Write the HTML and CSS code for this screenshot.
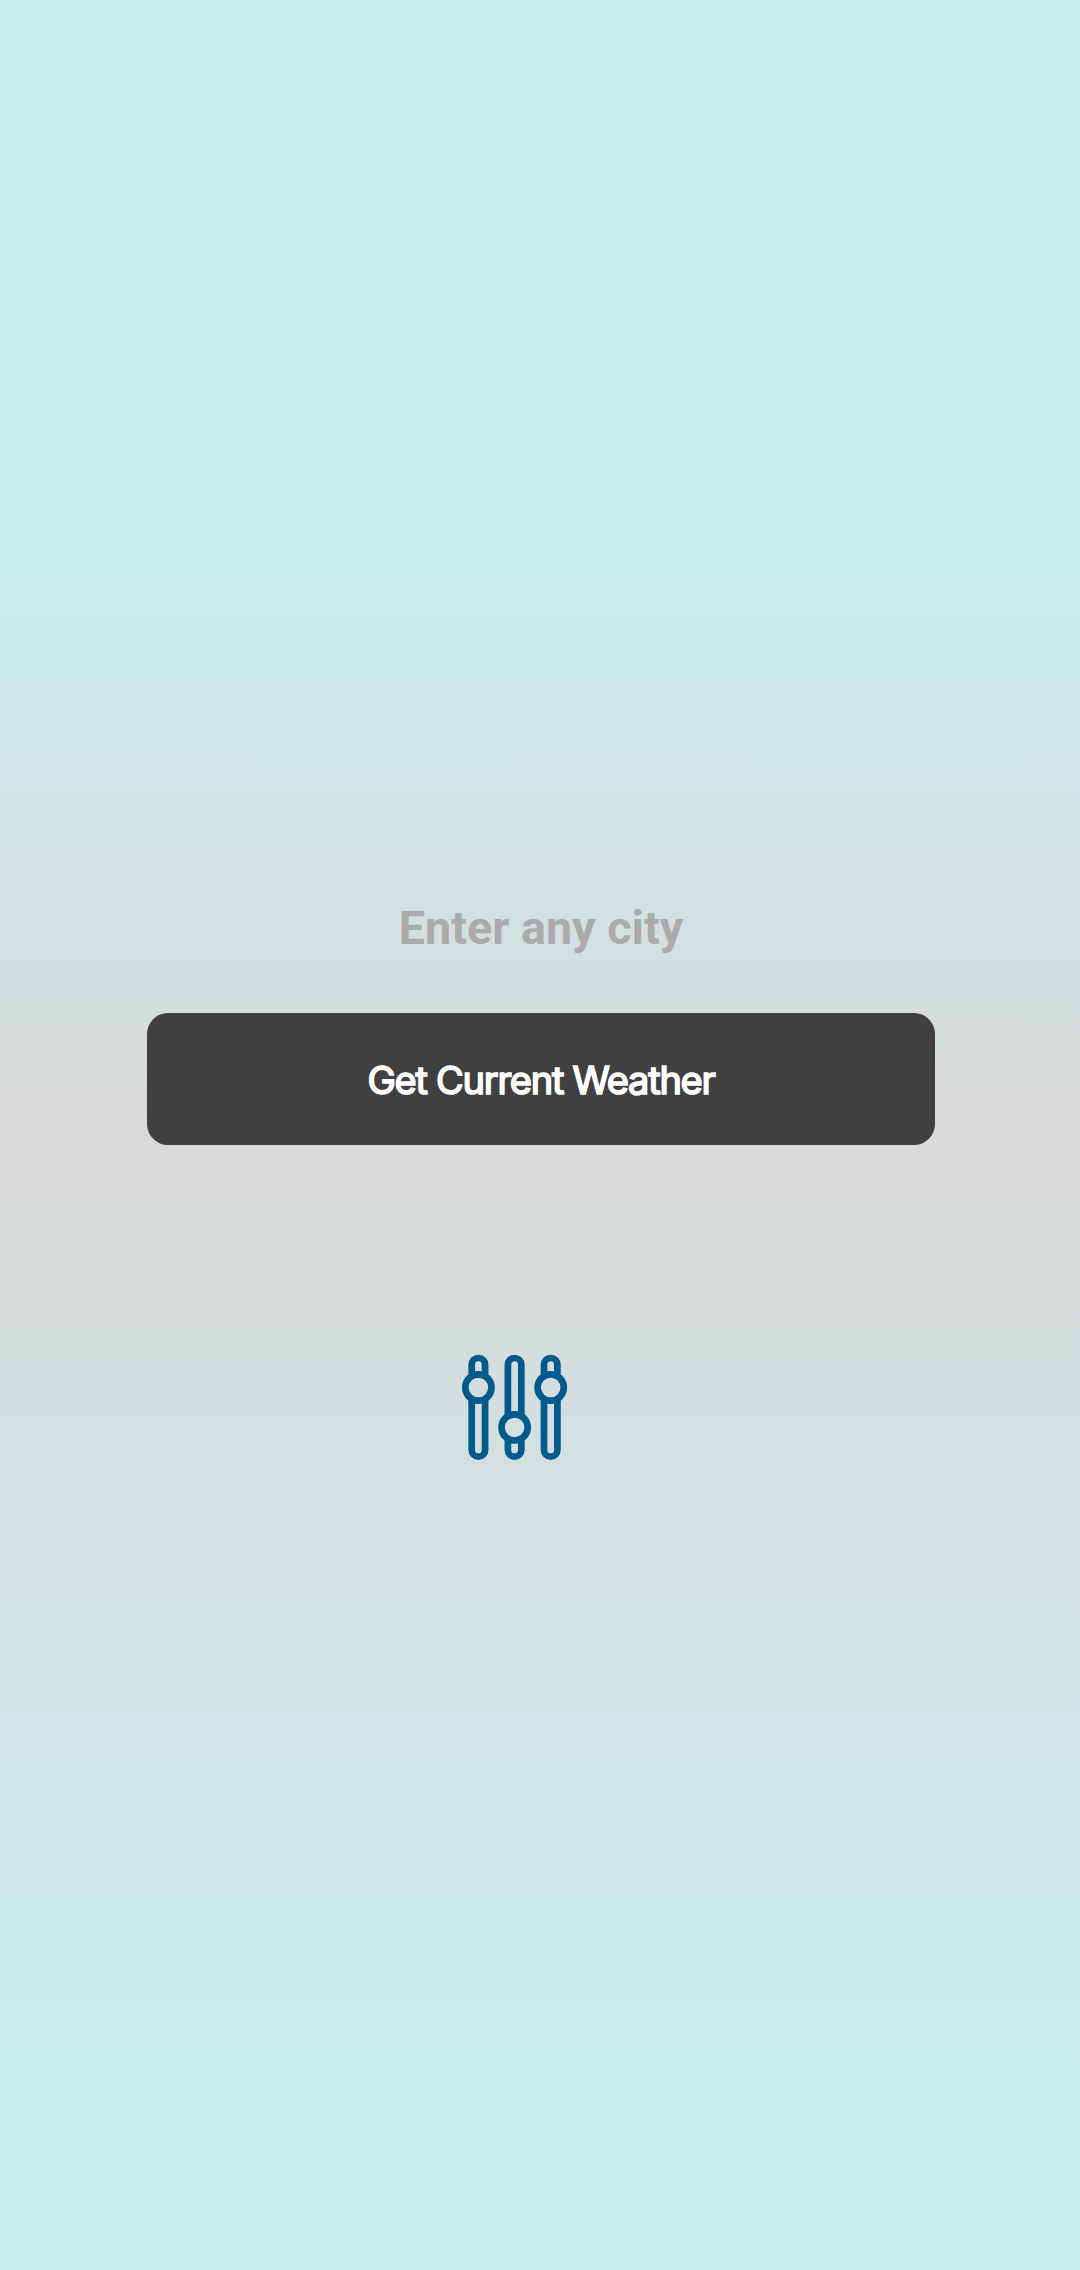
FILE: index.html
```html
<!DOCTYPE html>
<html lang="en">
<head>
<meta charset="utf-8">
<title>Weather</title>
<link rel="stylesheet" href="styles.css">
</head>
<body>
<main class="screen">
  <input class="city" type="text" placeholder="Enter any city" aria-label="City">
  <button class="submit" type="button">Get Current Weather</button>
  <svg class="sliders" viewBox="0 0 108 108" fill="none" stroke="currentColor" stroke-width="6.700" aria-label="Settings">
    <path d="M10.700 20V10.700a6.700 6.700 0 0 1 13.400 0V20M10.700 46v50a6.700 6.700 0 0 0 13.400 0V46"/>
    <circle cx="17.400" cy="33.500" r="13.100"/>
    <path d="M46.900 61V10.700a6.700 6.700 0 0 1 13.400 0V61M46.900 86v10a6.700 6.700 0 0 0 13.400 0V86"/>
    <circle cx="53.600" cy="73.400" r="13.100"/>
    <path d="M83 20V10.700a6.700 6.700 0 0 1 13.400 0V20M83 46v50a6.700 6.700 0 0 0 13.400 0V46"/>
    <circle cx="89.700" cy="33.500" r="13.100"/>
  </svg>
</main>
</body>
</html>
```
FILE: styles.css
```css
* { box-sizing: border-box; }
body { margin: 0; }
.screen {
  display: flex;
  flex-direction: column;
  align-items: center;
  height: 2270px;
  padding-top: 888px;
  background: linear-gradient(#c6eeef 0, #c6eeef 454px, #d9d9d9 1135px, #c6eeef 2270px);
}
.city {
  width: 788px;
  height: 80px;
  margin-left: 2px;
  padding: 0;
  border: 0;
  background: transparent;
  font: 700 46.700px Roboto, sans-serif;
  text-align: center;
}
.city::placeholder { color: #ababab; opacity: 1; }
.submit {
  width: 788px;
  height: 132px;
  margin: 45px 0 209px 2px;
  padding: 1px 0 0;
  border: 0;
  border-radius: 21px;
  background: #404040;
  color: #fff;
  font: 400 38px Inter, sans-serif;
  letter-spacing: -1.250px;
  -webkit-text-stroke: 1.600px #fff;
}
.sliders {
  width: 108px;
  height: 108px;
  margin-right: 50px;
  color: #005a8c;
}
```
